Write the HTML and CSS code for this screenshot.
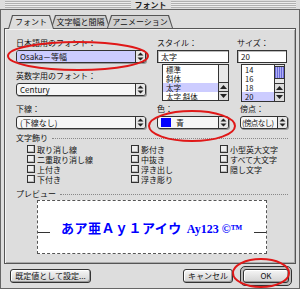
FILE: index.html
```html
<!DOCTYPE html>
<html lang="ja">
<head>
<meta charset="utf-8">
<title>フォント</title>
<link rel="stylesheet" href="styles.css">
</head>
<body>
<div class="window">
  <div class="titlebar">
    <div class="stripes"></div>
    <div class="title">フォント</div>
    <div class="stripes"></div>
  </div>
  <div class="frame">
    <div class="tabs">
      <div class="tab t1 active"><span>フォント</span></div>
      <div class="tab t2"><span>文字幅と間隔</span></div>
      <div class="tab t3"><span>アニメーション</span></div>
    </div>
    <div class="panel">
      <div class="top">
        <div class="c1">
          <div class="label">日本語用のフォント：</div>
          <div class="popup focus"><div class="val">Osaka－等幅</div><div class="arrows"><svg width="7" height="9" viewBox="0 0 7 9"><path d="M3.5 0.5L6.5 3.5H0.5Z M0.5 5.5H6.5L3.5 8.5Z" fill="#222"/></svg></div></div>
          <div class="label second">英数字用のフォント：</div>
          <div class="popup"><div class="val">Century</div><div class="arrows"><svg width="7" height="9" viewBox="0 0 7 9"><path d="M3.5 0.5L6.5 3.5H0.5Z M0.5 5.5H6.5L3.5 8.5Z" fill="#222"/></svg></div></div>
        </div>
        <div class="c2">
          <div class="label">スタイル：</div>
          <div class="field">太字</div>
          <div class="list style-list">
            <div class="items">
              <div class="item">標準</div>
              <div class="item">斜体</div>
              <div class="item sel">太字</div>
              <div class="item">太字 斜体</div>
            </div>
            <div class="sbar">
              <div class="track"></div>
              <div class="arr"><svg width="7" height="4" viewBox="0 0 7 4"><path d="M3.5 0L7 4H0Z" fill="#222"/></svg></div>
              <div class="arr"><svg width="7" height="4" viewBox="0 0 7 4"><path d="M0 0H7L3.5 4Z" fill="#222"/></svg></div>
            </div>
          </div>
        </div>
        <div class="c3">
          <div class="label">サイズ：</div>
          <div class="field">20</div>
          <div class="list size-list">
            <div class="items">
              <div class="item">14</div>
              <div class="item">16</div>
              <div class="item">18</div>
              <div class="item sel">20</div>
            </div>
            <div class="sbar">
              <div class="thumb"></div>
              <div class="track"></div>
              <div class="arr"><svg width="7" height="4" viewBox="0 0 7 4"><path d="M3.5 0L7 4H0Z" fill="#222"/></svg></div>
              <div class="arr"><svg width="7" height="4" viewBox="0 0 7 4"><path d="M0 0H7L3.5 4Z" fill="#222"/></svg></div>
            </div>
          </div>
        </div>
        <div class="c1">
          <div class="label">下線：</div>
          <div class="popup"><div class="val">(下線なし)</div><div class="arrows"><svg width="7" height="9" viewBox="0 0 7 9"><path d="M3.5 0.5L6.5 3.5H0.5Z M0.5 5.5H6.5L3.5 8.5Z" fill="#222"/></svg></div></div>
        </div>
        <div class="c2">
          <div class="label">色：</div>
          <div class="popup"><div class="val color"><span class="swatch"></span>青</div><div class="arrows"><svg width="7" height="9" viewBox="0 0 7 9"><path d="M3.5 0.5L6.5 3.5H0.5Z M0.5 5.5H6.5L3.5 8.5Z" fill="#222"/></svg></div></div>
        </div>
        <div class="c3 shift">
          <div class="label">傍点：</div>
          <div class="popup"><div class="val tight">(傍点なし)</div><div class="arrows"><svg width="7" height="9" viewBox="0 0 7 9"><path d="M3.5 0.5L6.5 3.5H0.5Z M0.5 5.5H6.5L3.5 8.5Z" fill="#222"/></svg></div></div>
        </div>
      </div>

      <div class="sect">文字飾り</div>
      <div class="deco">
        <div class="cb"><span class="box"></span>取り消し線</div>
        <div class="cb"><span class="box"></span>二重取り消し線</div>
        <div class="cb"><span class="box"></span>上付き</div>
        <div class="cb"><span class="box"></span>下付き</div>
        <div class="cb"><span class="box"></span>影付き</div>
        <div class="cb"><span class="box"></span>中抜き</div>
        <div class="cb"><span class="box"></span>浮き出し</div>
        <div class="cb"><span class="box"></span>浮き彫り</div>
        <div class="cb"><span class="box"></span>小型英大文字</div>
        <div class="cb"><span class="box"></span>すべて大文字</div>
        <div class="cb"><span class="box"></span>隠し文字</div>
      </div>

      <div class="sect prev-label">プレビュー</div>
      <div class="preview">
        <div class="prow">
          <span class="bl"></span>
          <span class="ptext"><span class="jp">あア亜Ａｙ１アイウ</span><span class="en">Ay123 ©™</span></span>
          <span class="bl right"></span>
        </div>
      </div>
    </div>

    <div class="buttons">
      <div class="btn default-set">既定値として設定...</div>
      <div class="btn cancel">キャンセル</div>
      <div class="ring"><div class="btn ok">OK</div></div>
    </div>
  </div>

  <svg class="marks" width="300" height="289" viewBox="0 0 300 289">
    <ellipse cx="78" cy="56" rx="70" ry="14" fill="none" stroke="#e01818" stroke-width="2"/>
    <ellipse cx="192" cy="126" rx="43" ry="15" fill="none" stroke="#e01818" stroke-width="2"/>
    <ellipse cx="261" cy="273" rx="28" ry="14" fill="none" stroke="#e01818" stroke-width="2"/>
  </svg>
</div>
</body>
</html>
```

FILE: styles.css
```css
* { box-sizing: border-box; }

html, body {
  margin: 0;
  padding: 0;
  background: #dddddd;
}

body {
  width: 300px;
  height: 289px;
  overflow: hidden;
  font-family: "Noto Sans CJK JP", "Noto Sans", sans-serif;
  font-size: 8px;
  color: #111;
}

.window {
  position: relative;
  width: 300px;
  height: 289px;
  background: #dddddd;
}

/* title bar */
.titlebar {
  height: 9px;
  display: flex;
  align-items: center;
  padding: 0 4px 0 5px;
  background: #dddddd;
}

.stripes {
  flex: 1;
  height: 7px;
  background: repeating-linear-gradient(to bottom, #b0b0b0 0 1px, #ececec 1px 2px);
}

.title {
  padding: 0 4px;
  font-weight: bold;
  line-height: 9px;
  color: #222;
}

/* frame */
.frame {
  height: 280px;
  border: 1px solid #666;
  padding: 0 3px;
  background: #dddddd;
}

/* tabs */
.tabs {
  display: flex;
  align-items: flex-end;
  padding: 5px 0 0 4px;
  height: 18px;
}

.tab {
  position: relative;
  height: 13px;
  padding: 1px 1px 0;
  background: #555;
  clip-path: polygon(4px 0, calc(100% - 4px) 0, 100% 100%, 0 100%);
}

.tab span {
  display: block;
  height: 100%;
  background: #cfcfcf;
  clip-path: polygon(4px 0, calc(100% - 4px) 0, 100% 100%, 0 100%);
  text-align: center;
  line-height: 12px;
  white-space: nowrap;
}

.tab.t1 { width: 46px; }
.tab.t2 { width: 59px; margin-left: -3px; }
.tab.t3 { width: 66px; margin-left: -3px; }

.tab.active {
  z-index: 2;
  height: 14px;
  margin-bottom: -1px;
}

.tab.active span {
  background: #dddddd;
}

/* panel */
.panel {
  position: relative;
  z-index: 1;
  border: 1px solid #555;
  background: #dddddd;
  box-shadow: inset 1px 1px 0 #f4f4f4, inset -1px -1px 0 #aaa;
  padding: 9px 7px 9px 11px;
}

.top {
  display: grid;
  grid-template-columns: 130px 11px 72px 8px 50px;
  row-gap: 2px;
}

.c1 { grid-column: 1; }
.c2 { grid-column: 3; }
.c3 { grid-column: 5; }
.c3.shift { margin-left: 3px; width: 48px; }

.label {
  height: 10px;
  line-height: 10px;
  margin-bottom: 2px;
  white-space: nowrap;
}

.label.second { margin-top: 8px; }

/* popup */
.popup {
  display: flex;
  height: 13px;
  border: 1px solid #333;
  border-radius: 3px;
  background: #f6f6f6;
  box-shadow: 1px 1px 0 #999;
  overflow: hidden;
}

.popup .val {
  flex: 1;
  padding-left: 3px;
  line-height: 11px;
  white-space: nowrap;
  overflow: hidden;
}

.popup .val.tight {
  padding-left: 1px;
  letter-spacing: -0.6px;
  font-size: 7.5px;
}

.popup.focus .val {
  background: #ccccff;
}

.popup .arrows {
  width: 10px;
  flex: none;
  border-left: 1px solid #333;
  background: #e6e6e6;
  display: flex;
  align-items: center;
  justify-content: center;
}

.val.color {
  display: flex;
  align-items: center;
  gap: 5px;
}

.swatch {
  display: block;
  width: 10px;
  height: 9px;
  background: #0000ff;
}

/* text field */
.field {
  height: 13px;
  border: 1px solid #333;
  background: #fff;
  box-shadow: inset 1px 1px 0 #bbb;
  padding-left: 3px;
  line-height: 11px;
}

/* lists */
.list {
  display: flex;
  height: 37px;
  margin-top: 1px;
  border: 1px solid #333;
  background: #fff;
  overflow: hidden;
}

.style-list { margin-left: 5px; }
.size-list { margin-left: 4px; margin-right: 2px; height: 38px; }

.items {
  flex: 1;
  overflow: hidden;
}

.item {
  height: 9px;
  line-height: 9px;
  padding-left: 3px;
  white-space: nowrap;
  font-size: 7.5px;
  overflow: hidden;
}

.item.sel { background: #ccccff; }

.sbar {
  width: 10px;
  border-left: 1px solid #333;
  background: #e8e8e8;
  display: flex;
  flex-direction: column;
}

.sbar .track { flex: 1; }

.sbar .thumb {
  height: 13px;
  margin: 1px 0 0;
  border-top: 1px solid #333;
  border-bottom: 1px solid #333;
  background:
    repeating-linear-gradient(to right, #6a6ad8 0 1px, #b0b0f4 1px 2px);
}

.sbar .arr {
  height: 9px;
  border-top: 1px solid #333;
  background: #dcdcdc;
  display: flex;
  align-items: center;
  justify-content: center;
}

/* sections */
.sect {
  display: flex;
  align-items: center;
  gap: 4px;
  height: 10px;
  line-height: 10px;
  margin-top: 4px;
  white-space: nowrap;
}

.sect::after {
  content: "";
  flex: 1;
  border-top: 1px dotted #888;
}

.prev-label { margin-top: 5px; }

.deco {
  display: grid;
  grid-template-columns: 104px 89px 1fr;
  grid-template-rows: repeat(4, 10px);
  grid-auto-flow: column;
  margin: 1px 0 0 11px;
}

.cb {
  display: flex;
  align-items: center;
  gap: 2px;
  height: 10px;
  white-space: nowrap;
}

.box {
  display: block;
  width: 8px;
  height: 8px;
  border: 1px solid #333;
  background: #eeeeee;
  box-shadow: inset -1px -1px 0 #bbb;
}

/* preview */
.preview {
  margin: 1px 0 0 21px;
  width: 230px;
  height: 54px;
  border: 1px dashed #555;
  background: #fff;
  display: flex;
  align-items: center;
}

.prow {
  display: flex;
  align-items: baseline;
  width: 100%;
}

.bl {
  display: block;
  width: 12px;
  height: 1px;
  background: #333;
}

.bl.right { margin-left: auto; }

.ptext {
  margin-left: 11px;
  color: #0000ff;
  font-weight: bold;
  white-space: nowrap;
}

.jp {
  font-family: "Noto Sans CJK JP", sans-serif;
  font-size: 13px;
  letter-spacing: 0.5px;
}

.en {
  font-family: "Liberation Serif", serif;
  font-size: 12px;
  margin-left: 5px;
}

/* buttons */
.buttons {
  display: flex;
  align-items: center;
  height: 20px;
  margin-top: 2px;
  padding: 0 4px 0 6px;
}

.btn {
  height: 14px;
  border: 1px solid #333;
  border-radius: 3px;
  background: linear-gradient(#f6f6f6, #d2d2d2);
  box-shadow: inset -1px -1px 0 #999, inset 1px 1px 0 #fff;
  text-align: center;
  line-height: 12px;
  white-space: nowrap;
}

.default-set { width: 81px; }
.cancel { width: 50px; margin-left: auto; }

.ring {
  margin-left: 7px;
  border: 1px solid #333;
  border-radius: 5px;
  padding: 2px;
  background: #bdbdbd;
}

.ok { width: 46px; }

/* red annotation marks */
.marks {
  position: absolute;
  left: 0;
  top: 0;
  pointer-events: none;
  z-index: 5;
}
```
